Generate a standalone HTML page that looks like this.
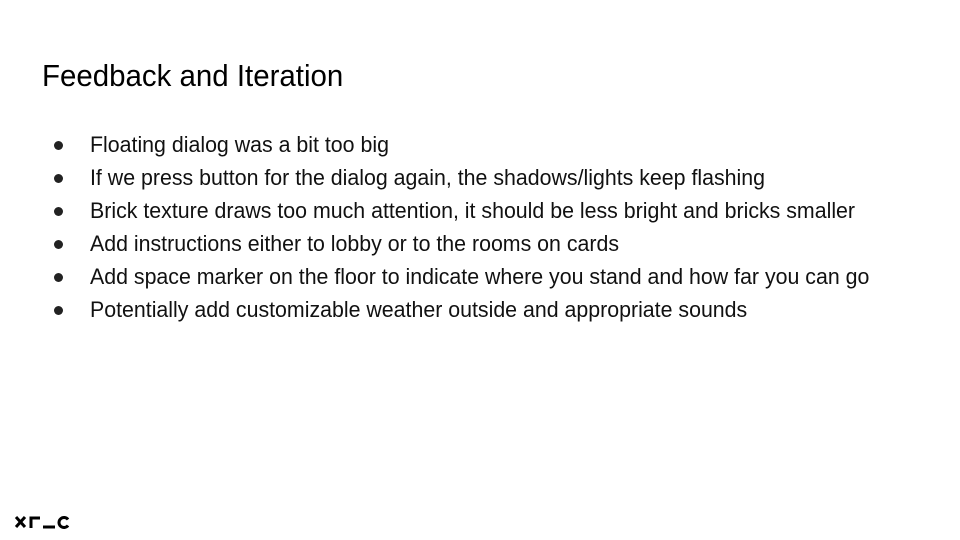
<!DOCTYPE html>
<html><head><style>
body{margin:0;width:960px;height:540px;background:#fff;overflow:hidden;font-family:"Liberation Sans",sans-serif;color:#000;position:relative}
.t{position:absolute;left:42px;top:58px;font-size:31px;white-space:nowrap;transform:scaleX(0.95);transform-origin:left top}
.l{position:absolute;left:90px;font-size:22px;white-space:nowrap;transform:scaleX(0.97);transform-origin:left top;color:#111}
.b{position:absolute;left:54px;width:9px;height:9px;border-radius:50%;background:#222}
</style></head><body>
<div class="t">Feedback and Iteration</div>
<div class="b" style="top:141px"></div><div class="l" style="top:132px">Floating dialog was a bit too big</div>
<div class="b" style="top:174px"></div><div class="l" style="top:165px">If we press button for the dialog again, the shadows/lights keep flashing</div>
<div class="b" style="top:207px"></div><div class="l" style="top:198px">Brick texture draws too much attention, it should be less bright and bricks smaller</div>
<div class="b" style="top:240px"></div><div class="l" style="top:231px">Add instructions either to lobby or to the rooms on cards</div>
<div class="b" style="top:273px"></div><div class="l" style="top:264px">Add space marker on the floor to indicate where you stand and how far you can go</div>
<div class="b" style="top:306px"></div><div class="l" style="top:297px">Potentially add customizable weather outside and appropriate sounds</div>
<svg style="position:absolute;left:14px;top:512px" width="60" height="20" viewBox="0 0 60 20">
<path d="M2 5 L11 15 M11 5 L2 15" stroke="#000" stroke-width="3"/>
<path d="M17 16 V6 H26" stroke="#000" stroke-width="3" fill="none"/>
<path d="M29 15 H41" stroke="#000" stroke-width="3"/>
<path d="M54 7.5 A5 5 0 1 0 54 13.5" stroke="#000" stroke-width="3" fill="none"/>
</svg>
</body></html>
